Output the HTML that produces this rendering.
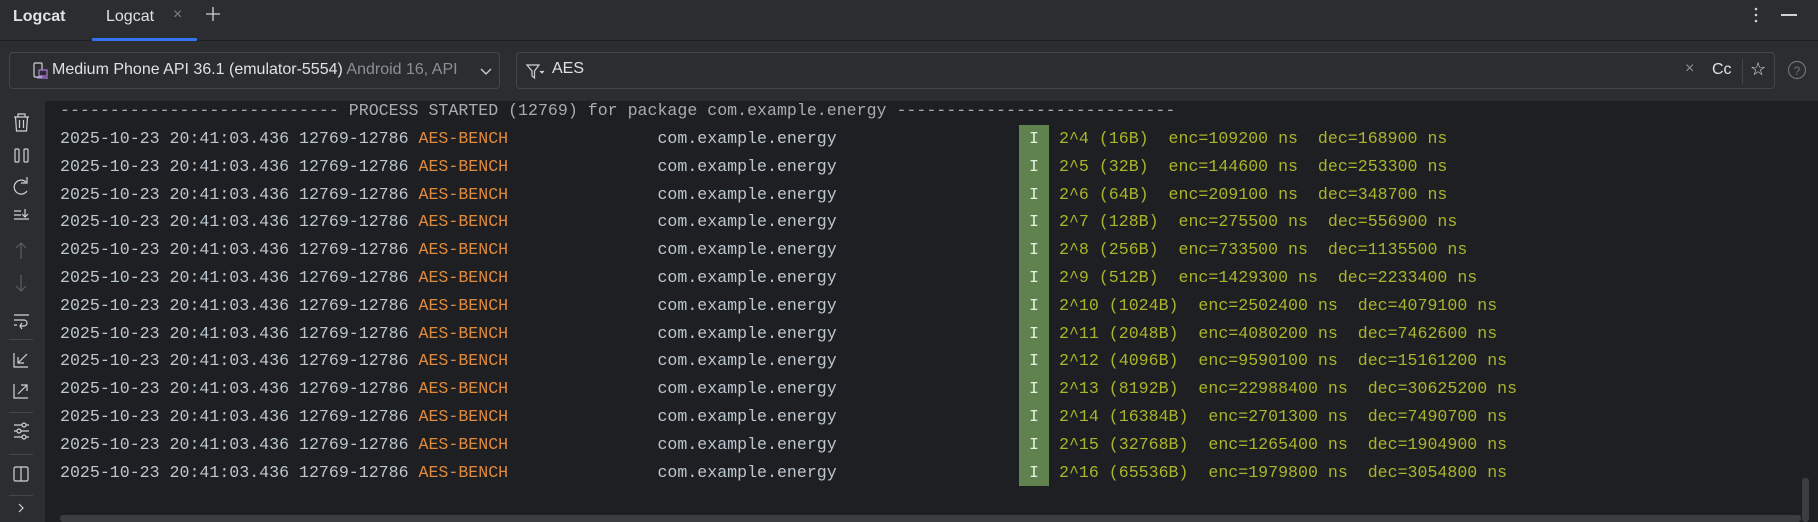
<!DOCTYPE html>
<html><head><meta charset="utf-8"><style>
*{margin:0;padding:0;box-sizing:border-box}
body{width:1818px;height:522px;background:#1e1f22;overflow:hidden;position:relative;font-family:"Liberation Sans",sans-serif}
.abs{position:absolute}
#hdr{left:0;top:0;width:1818px;height:101px;background:#2b2d30}
#sep{left:0;top:40px;width:1818px;height:1px;background:#1e1f22}
#side{left:0;top:101px;width:45px;height:421px;background:#2b2d30}
.box{border:1px solid #43454a;border-radius:4px;background:#2b2d30}
.row{position:absolute;left:60px;height:28px;line-height:28px;font-family:"Liberation Mono",monospace;font-size:16.6px;white-space:pre;color:#bcc6cf}
.tag{color:#e08a3c}
.msg{position:absolute;left:999px;color:#aab52b}
.I{position:absolute;left:969px;color:#e8f0e0}
.hs{position:absolute;left:9px;width:24px;height:1px;background:#43454a}
</style></head><body>
<div id="hdr" class="abs"></div>
<div id="sep" class="abs"></div>
<div class="abs" style="left:13px;top:8px;font-size:16px;font-weight:bold;color:#dfe1e5">Logcat</div>
<div class="abs" style="left:106px;top:8px;font-size:16px;color:#dfe1e5">Logcat</div>
<div class="abs" style="left:173px;top:6px;font-size:16px;color:#7e8086">×</div>
<svg class="abs" style="left:205px;top:6px" width="16" height="16"><path d="M8 1V15M1 8H15" stroke="#cfd1d5" stroke-width="1.3"/></svg>
<div class="abs" style="left:92px;top:38px;width:105px;height:3px;background:#3574f0;border-radius:1px"></div>
<svg class="abs" style="left:1752px;top:6px" width="8" height="20"><circle cx="4" cy="3" r="1.3" fill="#cfd1d5"/><circle cx="4" cy="9" r="1.3" fill="#cfd1d5"/><circle cx="4" cy="15" r="1.3" fill="#cfd1d5"/></svg>
<div class="abs" style="left:1781px;top:14px;width:16px;height:1.5px;background:#cfd1d5"></div>

<div class="abs box" style="left:9px;top:52px;width:491px;height:37px;overflow:hidden">
<svg class="abs" style="left:22px;top:9px" width="18" height="18"><rect x="2" y="1" width="8" height="14" rx="1" fill="none" stroke="#cfd1d5" stroke-width="1.2"/><rect x="7" y="8" width="8" height="6" fill="#2b2d30" stroke="#b07cd8" stroke-width="1.2"/><path d="M5 16H16" stroke="#b07cd8" stroke-width="1.2"/></svg>
<div class="abs" style="left:42px;top:8px;font-size:16px;color:#dfe1e5;white-space:nowrap;width:413px;overflow:hidden">Medium Phone API 36.1 (emulator-5554) <span style="color:#8c8f94">Android 16, API</span></div>
<svg class="abs" style="left:470px;top:14px" width="12" height="10"><path d="M1 2L6 7L11 2" fill="none" stroke="#cfd1d5" stroke-width="1.3"/></svg>
</div>
<div class="abs box" style="left:516px;top:52px;width:1259px;height:37px">
<svg class="abs" style="left:9px;top:10px" width="20" height="18"><path d="M1 2H13L8.5 8V15L6 13V8Z" fill="none" stroke="#cfd1d5" stroke-width="1.2"/><path d="M14 8L16 10L18 8" fill="#cfd1d5" stroke="#cfd1d5" stroke-width="1"/></svg>
<div class="abs" style="left:35px;top:7px;font-size:16px;color:#dfe1e5">AES</div>
<div class="abs" style="left:1168px;top:7px;font-size:16px;color:#8c8f94">×</div>
<div class="abs" style="left:1195px;top:8px;font-size:16px;color:#dfe1e5">Cc</div>
<div class="abs" style="left:1225px;top:6px;width:1px;height:25px;background:#43454a"></div>
<div class="abs" style="left:1233px;top:6px;font-size:18px;color:#dfe1e5">☆</div>
</div>
<svg class="abs" style="left:1787px;top:60px" width="20" height="20"><circle cx="10" cy="10" r="8.5" fill="none" stroke="#6f7277" stroke-width="1.2"/><text x="10" y="15" font-size="12" text-anchor="middle" fill="#6f7277" font-family="Liberation Sans">?</text></svg>

<div id="side" class="abs"></div>
<svg class="abs" style="left:0;top:101px" width="45" height="421" fill="none" stroke="#cfd1d5" stroke-width="1.2">
<path d="M14 16H29M18 16V13H25V16M15.5 16L16.5 30H26.5L27.5 16M19.5 19V27M23.5 19V27"/>
<rect x="15" y="48" width="4" height="13" rx="1"/><rect x="24" y="48" width="4" height="13" rx="1"/>
<path d="M27 90A7 7 0 1 1 26 81M27 76V82H21" />
<path d="M14 110H21M14 114H21M14 118H29M25 108V116M22 113L25 116L28 113"/>
<path d="M21 142V158M16 147L21 142L26 147" stroke="#5b5d62"/>
<path d="M21 174V190M16 185L21 190L26 185" stroke="#5b5d62"/>
<path d="M14 214H29M14 219H24A3 3 0 0 1 24 225H20M22 222L20 225L22 228M14 224H17"/>
<path d="M14 252V266H28M18 262L27 253M18 256V262H24"/>
<path d="M14 283V297H28M18 293L27 284M21 284H27V290"/>
<path d="M14 324H29M14 330H29M14 336H29"/><circle cx="24" cy="324" r="2" fill="#2b2d30"/><circle cx="19" cy="330" r="2" fill="#2b2d30"/><circle cx="24" cy="336" r="2" fill="#2b2d30"/>
<rect x="14" y="366" width="14" height="14" rx="1.5"/><path d="M21 366V380"/>
<path d="M19 403L23 407L19 411"/>
</svg>
<div class="hs" style="top:339px"></div><div class="hs" style="top:412px"></div><div class="hs" style="top:454px"></div><div class="hs" style="top:495px"></div>

<div class="abs" style="left:1019px;top:125px;width:30px;height:361px;background:#5f824f"></div>

<div class="row" style="top:97px;color:#a9abb0">---------------------------- PROCESS STARTED (12769) for package com.example.energy ----------------------------</div>
<div class="row" style="top:125px">2025-10-23 20:41:03.436 12769-12786 <span class="tag">AES-BENCH</span>               com.example.energy<span class="I">I</span><span class="msg">2^4 (16B)  enc=109200 ns  dec=168900 ns</span></div>
<div class="row" style="top:152.8px">2025-10-23 20:41:03.436 12769-12786 <span class="tag">AES-BENCH</span>               com.example.energy<span class="I">I</span><span class="msg">2^5 (32B)  enc=144600 ns  dec=253300 ns</span></div>
<div class="row" style="top:180.6px">2025-10-23 20:41:03.436 12769-12786 <span class="tag">AES-BENCH</span>               com.example.energy<span class="I">I</span><span class="msg">2^6 (64B)  enc=209100 ns  dec=348700 ns</span></div>
<div class="row" style="top:208.4px">2025-10-23 20:41:03.436 12769-12786 <span class="tag">AES-BENCH</span>               com.example.energy<span class="I">I</span><span class="msg">2^7 (128B)  enc=275500 ns  dec=556900 ns</span></div>
<div class="row" style="top:236.2px">2025-10-23 20:41:03.436 12769-12786 <span class="tag">AES-BENCH</span>               com.example.energy<span class="I">I</span><span class="msg">2^8 (256B)  enc=733500 ns  dec=1135500 ns</span></div>
<div class="row" style="top:264px">2025-10-23 20:41:03.436 12769-12786 <span class="tag">AES-BENCH</span>               com.example.energy<span class="I">I</span><span class="msg">2^9 (512B)  enc=1429300 ns  dec=2233400 ns</span></div>
<div class="row" style="top:291.8px">2025-10-23 20:41:03.436 12769-12786 <span class="tag">AES-BENCH</span>               com.example.energy<span class="I">I</span><span class="msg">2^10 (1024B)  enc=2502400 ns  dec=4079100 ns</span></div>
<div class="row" style="top:319.6px">2025-10-23 20:41:03.436 12769-12786 <span class="tag">AES-BENCH</span>               com.example.energy<span class="I">I</span><span class="msg">2^11 (2048B)  enc=4080200 ns  dec=7462600 ns</span></div>
<div class="row" style="top:347.4px">2025-10-23 20:41:03.436 12769-12786 <span class="tag">AES-BENCH</span>               com.example.energy<span class="I">I</span><span class="msg">2^12 (4096B)  enc=9590100 ns  dec=15161200 ns</span></div>
<div class="row" style="top:375.2px">2025-10-23 20:41:03.436 12769-12786 <span class="tag">AES-BENCH</span>               com.example.energy<span class="I">I</span><span class="msg">2^13 (8192B)  enc=22988400 ns  dec=30625200 ns</span></div>
<div class="row" style="top:403px">2025-10-23 20:41:03.436 12769-12786 <span class="tag">AES-BENCH</span>               com.example.energy<span class="I">I</span><span class="msg">2^14 (16384B)  enc=2701300 ns  dec=7490700 ns</span></div>
<div class="row" style="top:430.8px">2025-10-23 20:41:03.436 12769-12786 <span class="tag">AES-BENCH</span>               com.example.energy<span class="I">I</span><span class="msg">2^15 (32768B)  enc=1265400 ns  dec=1904900 ns</span></div>
<div class="row" style="top:458.6px">2025-10-23 20:41:03.436 12769-12786 <span class="tag">AES-BENCH</span>               com.example.energy<span class="I">I</span><span class="msg">2^16 (65536B)  enc=1979800 ns  dec=3054800 ns</span></div>

<div class="abs" style="left:60px;top:515px;width:1741px;height:7px;background:#3b3d41;border-radius:3px"></div>
<div class="abs" style="left:1802px;top:478px;width:7px;height:44px;background:#3b3d41;border-radius:3px"></div>
</body></html>
